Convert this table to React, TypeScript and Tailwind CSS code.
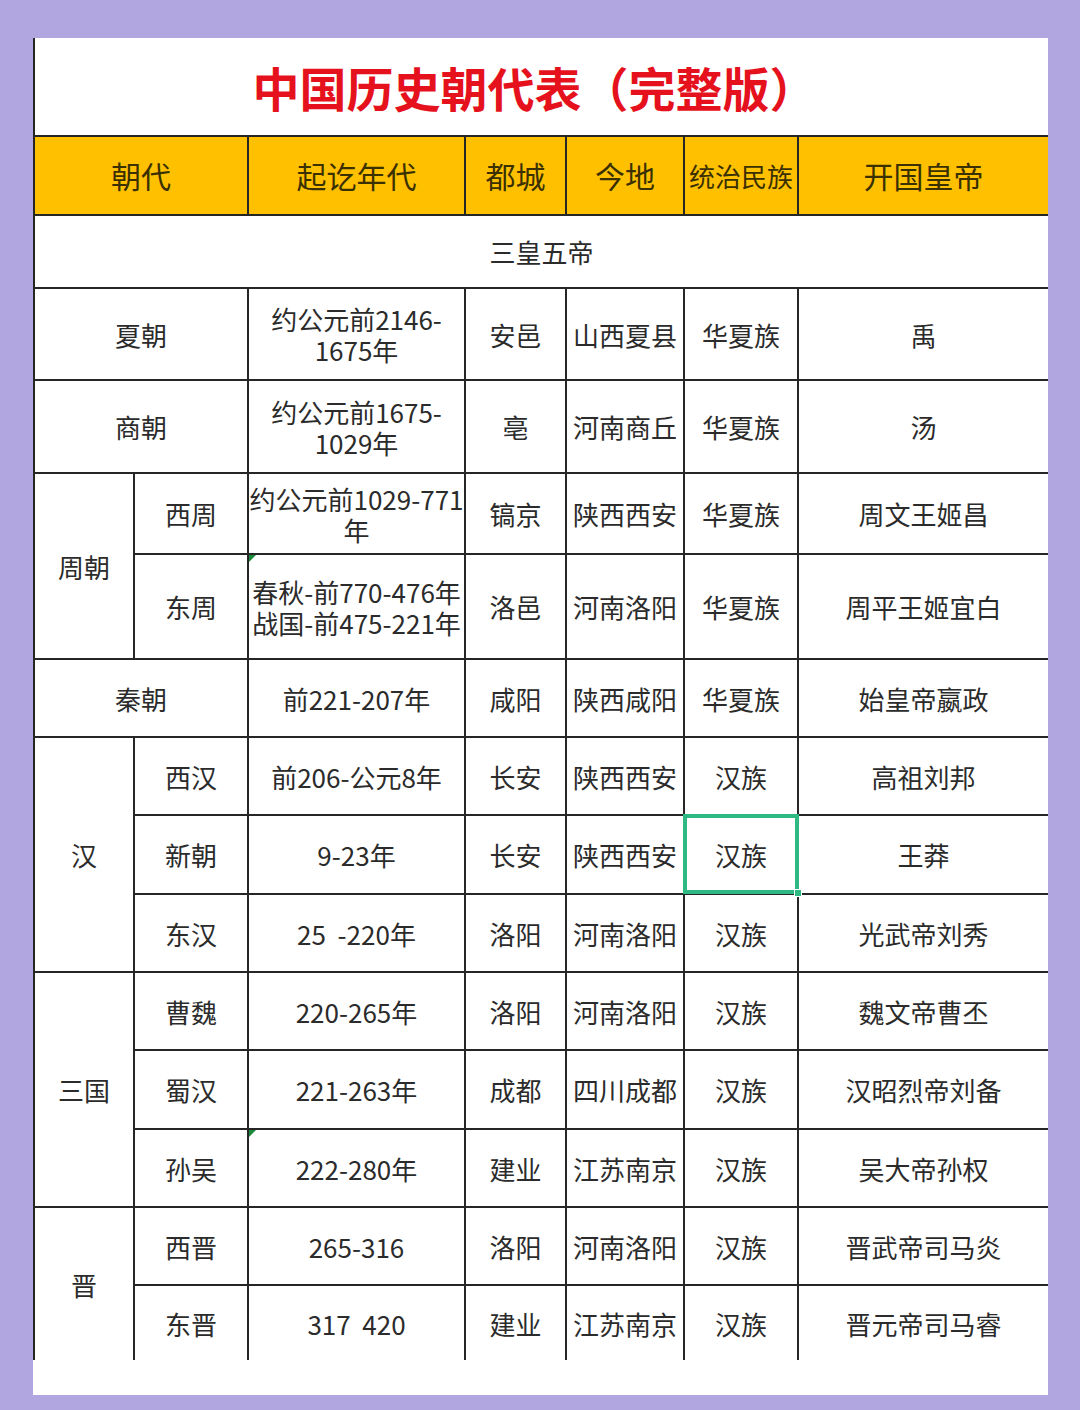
type Row = {
  sub?: string;
  date: string[];
  capital: string;
  place: string;
  ethnic: string;
  founder: string;
  mark?: boolean;
  selected?: boolean;
};

type Group = { name: string; rows: Row[] };

const groups: Group[] = [
  {
    name: "夏朝",
    rows: [{ date: ["约公元前2146-", "1675年"], capital: "安邑", place: "山西夏县", ethnic: "华夏族", founder: "禹" }],
  },
  {
    name: "商朝",
    rows: [{ date: ["约公元前1675-", "1029年"], capital: "亳", place: "河南商丘", ethnic: "华夏族", founder: "汤" }],
  },
  {
    name: "周朝",
    rows: [
      { sub: "西周", date: ["约公元前1029-771", "年"], capital: "镐京", place: "陕西西安", ethnic: "华夏族", founder: "周文王姬昌" },
      {
        sub: "东周",
        date: ["春秋-前770-476年", "战国-前475-221年"],
        capital: "洛邑",
        place: "河南洛阳",
        ethnic: "华夏族",
        founder: "周平王姬宜白",
        mark: true,
      },
    ],
  },
  {
    name: "秦朝",
    rows: [{ date: ["前221-207年"], capital: "咸阳", place: "陕西咸阳", ethnic: "华夏族", founder: "始皇帝嬴政" }],
  },
  {
    name: "汉",
    rows: [
      { sub: "西汉", date: ["前206-公元8年"], capital: "长安", place: "陕西西安", ethnic: "汉族", founder: "高祖刘邦" },
      { sub: "新朝", date: ["9-23年"], capital: "长安", place: "陕西西安", ethnic: "汉族", founder: "王莽", selected: true },
      { sub: "东汉", date: ["25  -220年"], capital: "洛阳", place: "河南洛阳", ethnic: "汉族", founder: "光武帝刘秀" },
    ],
  },
  {
    name: "三国",
    rows: [
      { sub: "曹魏", date: ["220-265年"], capital: "洛阳", place: "河南洛阳", ethnic: "汉族", founder: "魏文帝曹丕" },
      { sub: "蜀汉", date: ["221-263年"], capital: "成都", place: "四川成都", ethnic: "汉族", founder: "汉昭烈帝刘备" },
      { sub: "孙吴", date: ["222-280年"], capital: "建业", place: "江苏南京", ethnic: "汉族", founder: "吴大帝孙权", mark: true },
    ],
  },
  {
    name: "晋",
    rows: [
      { sub: "西晋", date: ["265-316"], capital: "洛阳", place: "河南洛阳", ethnic: "汉族", founder: "晋武帝司马炎" },
      { sub: "东晋", date: ["317  420"], capital: "建业", place: "江苏南京", ethnic: "汉族", founder: "晋元帝司马睿" },
    ],
  },
];

const spanClass: Record<number, string> = { 1: "", 2: "row-span-2", 3: "row-span-3" };

const cell = "border-t-2 border-l-2 border-[#262626] flex items-center justify-center text-center";

const headers = [
  { label: "朝代", span: "col-span-2", size: "text-[30px]" },
  { label: "起讫年代", span: "", size: "text-[30px]" },
  { label: "都城", span: "", size: "text-[30px]" },
  { label: "今地", span: "", size: "text-[30px]" },
  { label: "统治民族", span: "", size: "text-[26px]" },
  { label: "开国皇帝", span: "", size: "text-[30px]" },
];

export default function App() {
  return (
    <div className="min-h-[1410px] bg-[#b2a6e0] pt-[38px] pl-[33px] font-['Noto_Sans_CJK_SC',sans-serif] text-[#2b2b2b]">
      <div className="w-[1015px] bg-white pb-[35px]">
        <div className="h-[97px] border-l-2 border-[#262626] flex items-center justify-center pr-[14px]">
          <h1 className="text-[47px] font-bold text-[#e5121e] leading-none">中国历史朝代表（完整版）</h1>
        </div>

        <div className="grid grid-cols-[100px_114px_217px_101px_118px_114px_1fr] grid-rows-[79px_73px_92px_93px_81px_105px_78px_78px_79px_78px_78px_79px_78px_78px_76px] text-[26px]">
          {headers.map((h) => (
            <div key={h.label} className={`${cell} ${h.span} ${h.size} bg-[#ffc000] text-[#3a3000] whitespace-nowrap`}>
              {h.label}
            </div>
          ))}

          <div className={`${cell} col-span-7`}>三皇五帝</div>

          {groups.map((g) =>
            g.rows.map((r, i) => {
              const single = !r.sub;
              return (
                <>
                  {single ? (
                    <div key={g.name} className={`${cell} col-span-2`}>
                      {g.name}
                    </div>
                  ) : (
                    <>
                      {i === 0 && (
                        <div className={`${cell} ${spanClass[g.rows.length]}`}>{g.name}</div>
                      )}
                      <div className={cell}>{r.sub}</div>
                    </>
                  )}
                  <div className={`${cell} relative flex-col leading-[31px] whitespace-pre`}>
                    {r.mark && (
                      <span className="absolute left-0 top-0 w-0 h-0 border-t-[7px] border-t-[#1b8a3a] border-r-[7px] border-r-transparent" />
                    )}
                    {r.date.map((d) => (
                      <span key={d}>{d}</span>
                    ))}
                  </div>
                  <div className={cell}>{r.capital}</div>
                  <div className={`${cell} whitespace-nowrap`}>{r.place}</div>
                  <div className={`${cell} relative`}>
                    {r.ethnic}
                    {r.selected && (
                      <>
                        <span className="absolute z-10 -left-[2px] -top-[2px] -right-[2px] -bottom-[1px] border-[4px] border-[#2eb882]" />
                        <span className="absolute z-20 -right-[5px] -bottom-[4px] w-[8px] h-[8px] bg-[#2eb882] border border-white" />
                      </>
                    )}
                  </div>
                  <div className={cell}>{r.founder}</div>
                </>
              );
            })
          )}
        </div>
      </div>
    </div>
  );
}
